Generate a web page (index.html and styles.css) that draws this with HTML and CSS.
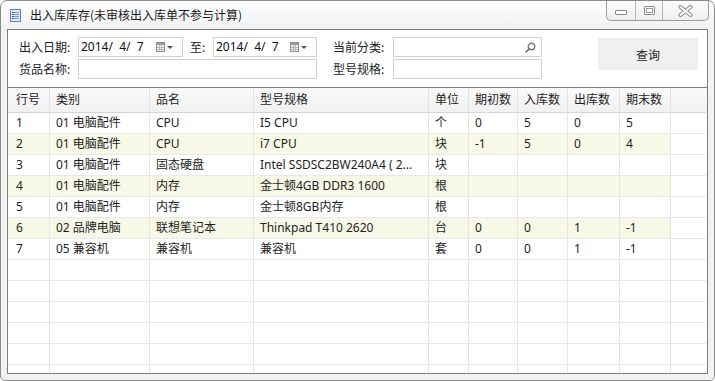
FILE: index.html
```html
<!DOCTYPE html>
<html lang="zh-CN">
<head>
<meta charset="utf-8">
<title>出入库库存</title>
<link rel="stylesheet" href="styles.css">
</head>
<body>
<div class="window">
  <div class="titlebar">
    <svg class="app-icon" width="11" height="13" viewBox="0 0 11 13">
      <rect x="0.5" y="0.5" width="10" height="12" fill="#e3eaf8" stroke="#5f7dc0"/>
      <path d="M2 3.5H9M2 5.5H9M2 7.5H9M2 9.5H9" stroke="#7d96d0" stroke-width="1"/>
      <path d="M2 3.5H3.5M2 5.5H3.5M2 7.5H3.5M2 9.5H3.5" stroke="#2f4f9e" stroke-width="1"/>
    </svg>
    <span class="title">出入库库存(未审核出入库单不参与计算)</span>
    <div class="caption">
      <div class="cbtn cmin"><span class="min-glyph"></span></div>
      <div class="cbtn cmax"><span class="max-glyph"></span></div>
      <div class="cbtn cclose">
        <svg width="15" height="12" viewBox="0 0 15 12">
          <path d="M2.5 2 L12.5 10 M12.5 2 L2.5 10" stroke="#8c8c8c" stroke-width="4" stroke-linecap="round"/>
          <path d="M2.5 2 L12.5 10 M12.5 2 L2.5 10" stroke="#ffffff" stroke-width="2" stroke-linecap="round"/>
        </svg>
      </div>
    </div>
  </div>
  <div class="client">
    <div class="filter">
      <span class="label">出入日期:</span>
      <div class="field date">
        <span class="date-text">2014/  4/  7</span>
        <svg class="cal" width="9" height="10" viewBox="0 0 9 10">
          <rect x="0.5" y="0.5" width="8" height="9" fill="#f4f4f4" stroke="#8f8f8f"/>
          <rect x="1" y="1" width="7" height="2" fill="#9a9a9a"/>
          <path d="M1 5.5H8M1 7.5H8M3.5 3V9.5M5.5 3V9.5" stroke="#b5b5b5" stroke-width="1"/>
        </svg>
        <span class="caret"></span>
      </div>
      <span class="label to">至:</span>
      <div class="field date">
        <span class="date-text">2014/  4/  7</span>
        <svg class="cal" width="9" height="10" viewBox="0 0 9 10">
          <rect x="0.5" y="0.5" width="8" height="9" fill="#f4f4f4" stroke="#8f8f8f"/>
          <rect x="1" y="1" width="7" height="2" fill="#9a9a9a"/>
          <path d="M1 5.5H8M1 7.5H8M3.5 3V9.5M5.5 3V9.5" stroke="#b5b5b5" stroke-width="1"/>
        </svg>
        <span class="caret"></span>
      </div>
      <span></span>
      <span class="label">当前分类:</span>
      <div class="field search">
        <svg width="11" height="11" viewBox="0 0 11 11">
          <circle cx="6.5" cy="4.5" r="3.2" fill="none" stroke="#7a7a7a" stroke-width="1.4"/>
          <path d="M4.3 6.8 L1.2 9.9" stroke="#7a7a7a" stroke-width="1.8" stroke-linecap="round"/>
        </svg>
      </div>
      <span></span>
      <button class="query">查询</button>

      <span class="label">货品名称:</span>
      <div class="field wide"></div>
      <span></span>
      <span class="label">型号规格:</span>
      <div class="field"></div>
    </div>

    <div class="grid">
      <div class="row head">
        <div class="c">行号</div><div class="c">类别</div><div class="c">品名</div><div class="c">型号规格</div><div class="c">单位</div><div class="c">期初数</div><div class="c">入库数</div><div class="c">出库数</div><div class="c">期末数</div><div class="c fill"></div>
      </div>
      <div class="row">
        <div class="c">1</div><div class="c">01 电脑配件</div><div class="c">CPU</div><div class="c">I5 CPU</div><div class="c">个</div><div class="c">0</div><div class="c">5</div><div class="c">0</div><div class="c">5</div><div class="c fill"></div>
      </div>
      <div class="row alt">
        <div class="c">2</div><div class="c">01 电脑配件</div><div class="c">CPU</div><div class="c">i7 CPU</div><div class="c">块</div><div class="c">-1</div><div class="c">5</div><div class="c">0</div><div class="c">4</div><div class="c fill"></div>
      </div>
      <div class="row">
        <div class="c">3</div><div class="c">01 电脑配件</div><div class="c">固态硬盘</div><div class="c">Intel SSDSC2BW240A4 ( 2...</div><div class="c">块</div><div class="c"></div><div class="c"></div><div class="c"></div><div class="c"></div><div class="c fill"></div>
      </div>
      <div class="row alt">
        <div class="c">4</div><div class="c">01 电脑配件</div><div class="c">内存</div><div class="c">金士顿4GB DDR3 1600</div><div class="c">根</div><div class="c"></div><div class="c"></div><div class="c"></div><div class="c"></div><div class="c fill"></div>
      </div>
      <div class="row">
        <div class="c">5</div><div class="c">01 电脑配件</div><div class="c">内存</div><div class="c">金士顿8GB内存</div><div class="c">根</div><div class="c"></div><div class="c"></div><div class="c"></div><div class="c"></div><div class="c fill"></div>
      </div>
      <div class="row alt">
        <div class="c">6</div><div class="c">02 品牌电脑</div><div class="c">联想笔记本</div><div class="c">Thinkpad T410 2620</div><div class="c">台</div><div class="c">0</div><div class="c">0</div><div class="c">1</div><div class="c">-1</div><div class="c fill"></div>
      </div>
      <div class="row">
        <div class="c">7</div><div class="c">05 兼容机</div><div class="c">兼容机</div><div class="c">兼容机</div><div class="c">套</div><div class="c">0</div><div class="c">0</div><div class="c">1</div><div class="c">-1</div><div class="c fill"></div>
      </div>
      <div class="row"><div class="c"></div><div class="c"></div><div class="c"></div><div class="c"></div><div class="c"></div><div class="c"></div><div class="c"></div><div class="c"></div><div class="c"></div><div class="c fill"></div></div>
      <div class="row"><div class="c"></div><div class="c"></div><div class="c"></div><div class="c"></div><div class="c"></div><div class="c"></div><div class="c"></div><div class="c"></div><div class="c"></div><div class="c fill"></div></div>
      <div class="row"><div class="c"></div><div class="c"></div><div class="c"></div><div class="c"></div><div class="c"></div><div class="c"></div><div class="c"></div><div class="c"></div><div class="c"></div><div class="c fill"></div></div>
      <div class="row"><div class="c"></div><div class="c"></div><div class="c"></div><div class="c"></div><div class="c"></div><div class="c"></div><div class="c"></div><div class="c"></div><div class="c"></div><div class="c fill"></div></div>
      <div class="row"><div class="c"></div><div class="c"></div><div class="c"></div><div class="c"></div><div class="c"></div><div class="c"></div><div class="c"></div><div class="c"></div><div class="c"></div><div class="c fill"></div></div>
      <div class="row"><div class="c"></div><div class="c"></div><div class="c"></div><div class="c"></div><div class="c"></div><div class="c"></div><div class="c"></div><div class="c"></div><div class="c"></div><div class="c fill"></div></div>
    </div>
  </div>
</div>
</body>
</html>
```
FILE: styles.css
```css
html, body {
  margin: 0;
  padding: 0;
}

body {
  width: 715px;
  height: 381px;
  overflow: hidden;
  background: #ffffff;
  font-family: "Noto Sans", "Noto Sans CJK SC", sans-serif;
  font-size: 12px;
  color: #1e1e1e;
}

.window {
  box-sizing: border-box;
  width: 715px;
  height: 381px;
  border: 1px solid #8a8a8a;
  border-radius: 7px 7px 5px 5px;
  background: linear-gradient(#fdfdfd, #f1f2f4 28px, #f1f2f4);
  display: flex;
  flex-direction: column;
  overflow: hidden;
}

.titlebar {
  height: 28px;
  flex: none;
  display: flex;
  align-items: flex-start;
}

.app-icon {
  margin: 8px 0 0 9px;
  flex: none;
}

.title {
  margin: 6px 0 0 9px;
  line-height: 16px;
  font-family: "Noto Sans CJK SC", sans-serif;
  color: #1a1a1a;
}

.caption {
  margin-left: auto;
  margin-right: 5px;
  display: flex;
  height: 19px;
  border: 1px solid #9c9c9c;
  border-top: none;
  border-radius: 0 0 5px 5px;
  overflow: hidden;
  background: linear-gradient(#fcfcfc, #eeeeee);
}

.cbtn {
  display: flex;
  justify-content: center;
  align-items: flex-start;
}

.cmin {
  width: 28px;
  border-right: 1px solid #b4b4b4;
}

.cmax {
  width: 26px;
  border-right: 1px solid #b4b4b4;
}

.cclose {
  width: 45px;
}

.cclose svg {
  margin-top: 4px;
}

.min-glyph {
  box-sizing: border-box;
  margin-top: 9px;
  width: 12px;
  height: 5px;
  border: 1px solid #8a8a8a;
  border-radius: 1px;
  background: #ffffff;
}

.max-glyph {
  box-sizing: border-box;
  margin-top: 5px;
  width: 11px;
  height: 9px;
  border: 1px solid #8a8a8a;
  border-radius: 1px;
  background: #ffffff;
  box-shadow: inset 0 0 0 1px #ffffff, inset 0 0 0 2px #9a9a9a;
}

.client {
  flex: 1;
  margin: 0 6px 6px 6px;
  border: 1px solid #7c7c7c;
  background: #ffffff;
  display: flex;
  flex-direction: column;
  overflow: hidden;
}

.filter {
  box-sizing: border-box;
  height: 57px;
  flex: none;
  padding: 7px 0 0 11px;
  display: grid;
  grid-template-columns: 59px 105px 30px 104px 16px 60px 149px 56px 100px;
  grid-template-rows: 20px 20px;
  row-gap: 2px;
}

.label {
  line-height: 20px;
  font-family: "Noto Sans CJK SC", sans-serif;
  color: #222222;
}

.label.to {
  padding-left: 7px;
}

.field {
  box-sizing: border-box;
  border: 1px solid #d2d2d2;
  background: #ffffff;
  display: flex;
  align-items: center;
}

.field.wide {
  grid-column: 2 / 5;
}

.field.date {
  padding: 0 9px 0 2px;
}

.date-text {
  white-space: pre;
  font-size: 12px;
  line-height: 18px;
  color: #111111;
}

.cal {
  margin-left: auto;
}

.caret {
  margin-left: 2px;
  width: 0;
  height: 0;
  border-left: 3px solid transparent;
  border-right: 3px solid transparent;
  border-top: 3px solid #44536a;
}

.field.search {
  justify-content: flex-end;
  padding-right: 5px;
}

.query {
  grid-column: 9;
  grid-row: 1 / 3;
  align-self: start;
  margin-top: 1px;
  height: 32px;
  border: none;
  background: #f0f0f0;
  font-family: "Noto Sans CJK SC", sans-serif;
  font-size: 12px;
  color: #1e1e1e;
  padding: 0;
}

.grid {
  flex: 1;
  border-top: 1px solid #7c7c7c;
  overflow: hidden;
}

.row {
  display: grid;
  grid-template-columns: 42px 100px 104px 175px 40px 49px 50px 52px 51px 35px;
  height: 21px;
}

.c {
  box-sizing: border-box;
  padding-left: 6px;
  border-right: 1px solid #e6e6e6;
  border-bottom: 1px solid #e8e8e8;
  line-height: 20px;
  white-space: nowrap;
  overflow: hidden;
}

.c:first-child {
  padding-left: 8px;
}

.c.fill {
  border-right: none;
}

.row.head {
  height: 25px;
  background: linear-gradient(#fafafa, #f0f0f0);
}

.row.head .c {
  line-height: 24px;
  border-bottom: 1px solid #d6d6d6;
  border-right-color: #e2e2e2;
}

.row.alt .c {
  background: #f8f8e7;
}

.row.alt .c.fill {
  background: #ffffff;
}
```
